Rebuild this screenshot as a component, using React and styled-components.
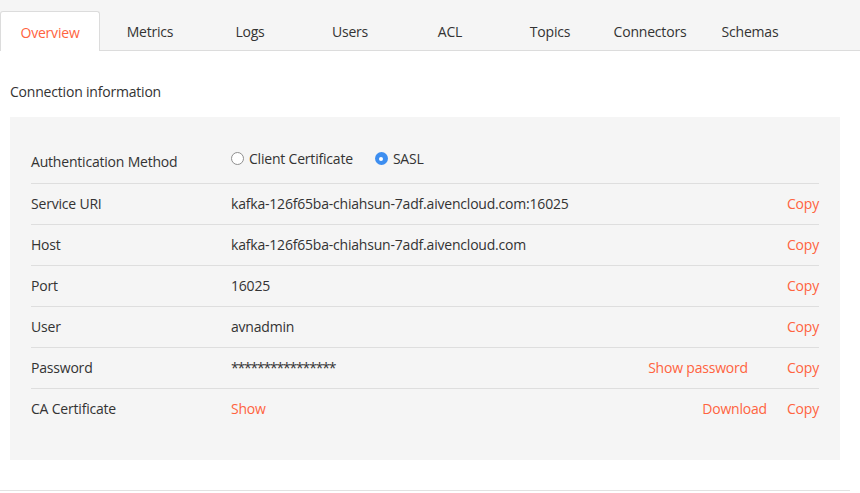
import React from "react";
import styled, { createGlobalStyle, css } from "styled-components";

const Global = createGlobalStyle`
  body { margin: 0; background: #fff; font-family: "Open Sans", "Noto Sans", sans-serif; color: #333; font-size: 14px; letter-spacing: -0.2px; }
`;

const ORANGE = "#ff6340";

const Page = styled.div`
  width: 850px;
  border-bottom: 1px solid #e2e2e2;
  padding-bottom: 30px;
`;

const TabBar = styled.nav`
  display: flex;
  align-items: flex-end;
  height: 51px;
  background: #f5f5f5;
  border-bottom: 1px solid #dcdcdc;
  width: 860px;
  box-sizing: border-box;
`;

const Tab = styled.div`
  width: 100px;
  height: 39px;
  box-sizing: border-box;
  display: flex;
  align-items: center;
  justify-content: center;
  padding-top: 2px;
  color: #333;
  ${(p) =>
    p.$active &&
    css`
      background: #fff;
      color: ${ORANGE};
      border: 1px solid #dcdcdc;
      border-bottom: none;
      border-radius: 3px 3px 0 0;
      height: 40px;
      margin-bottom: -1px;
    `}
`;

const Title = styled.h2`
  margin: 31px 10px 15px;
  font-size: 14px;
  font-weight: 400;
  line-height: 20px;
`;

const Panel = styled.section`
  margin: 0 10px;
  background: #f5f5f5;
  padding: 23px 21px 31px;
`;

const Row = styled.div`
  display: flex;
  align-items: center;
  height: ${(p) => (p.$first ? "43px" : "41px")};
  box-sizing: border-box;
  ${(p) => !p.$first && "border-top: 1px solid #dedede; padding-bottom: 2px;"}
`;

const Label = styled.div`
  width: 200px;
  flex: none;
`;

const Value = styled.div`
  flex: 1;
  letter-spacing: ${(p) => (p.$masked ? "-1.2px" : "inherit")};
`;

const Link = styled.span`
  color: ${ORANGE};
  cursor: pointer;
  margin-right: ${(p) => p.$mr || 0}px;
`;

const RadioGroup = styled.div`
  flex: 1;
  display: flex;
  align-items: center;
  gap: 22px;
  margin-top: -6px;
`;

const RadioOption = styled.label`
  display: flex;
  align-items: center;
  gap: 5px;
`;

const RadioCircle = styled.span`
  width: 13px;
  height: 13px;
  border-radius: 50%;
  box-sizing: border-box;
  display: inline-flex;
  align-items: center;
  justify-content: center;
  ${(p) =>
    p.$checked
      ? css`
          background: #3d8ef0;
          &::after {
            content: "";
            width: 4px;
            height: 4px;
            border-radius: 50%;
            background: #fff;
          }
        `
      : css`
          background: #fff;
          border: 1px solid #8f8f8f;
        `}
`;

const tabs = ["Overview", "Metrics", "Logs", "Users", "ACL", "Topics", "Connectors", "Schemas"];

const rows = [
  { label: "Service URI", value: "kafka-126f65ba-chiahsun-7adf.aivencloud.com:16025" },
  { label: "Host", value: "kafka-126f65ba-chiahsun-7adf.aivencloud.com" },
  { label: "Port", value: "16025" },
  { label: "User", value: "avnadmin" },
  { label: "Password", value: "****************", masked: true, extra: "Show password", mr: 39 },
  { label: "CA Certificate", link: "Show", extra: "Download", mr: 20 },
];

export default function App() {
  return (
    <>
      <Global />
      <Page>
        <TabBar>
          {tabs.map((t, i) => (
            <Tab key={t} $active={i === 0}>
              {t}
            </Tab>
          ))}
        </TabBar>
        <Title>Connection information</Title>
        <Panel>
          <Row $first>
            <Label>Authentication Method</Label>
            <RadioGroup>
              <RadioOption>
                <RadioCircle />
                Client Certificate
              </RadioOption>
              <RadioOption>
                <RadioCircle $checked />
                SASL
              </RadioOption>
            </RadioGroup>
          </Row>
          {rows.map((r) => (
            <Row key={r.label}>
              <Label>{r.label}</Label>
              <Value $masked={r.masked}>{r.link ? <Link>{r.link}</Link> : r.value}</Value>
              {r.extra && <Link $mr={r.mr}>{r.extra}</Link>}
              <Link>Copy</Link>
            </Row>
          ))}
        </Panel>
      </Page>
    </>
  );
}
